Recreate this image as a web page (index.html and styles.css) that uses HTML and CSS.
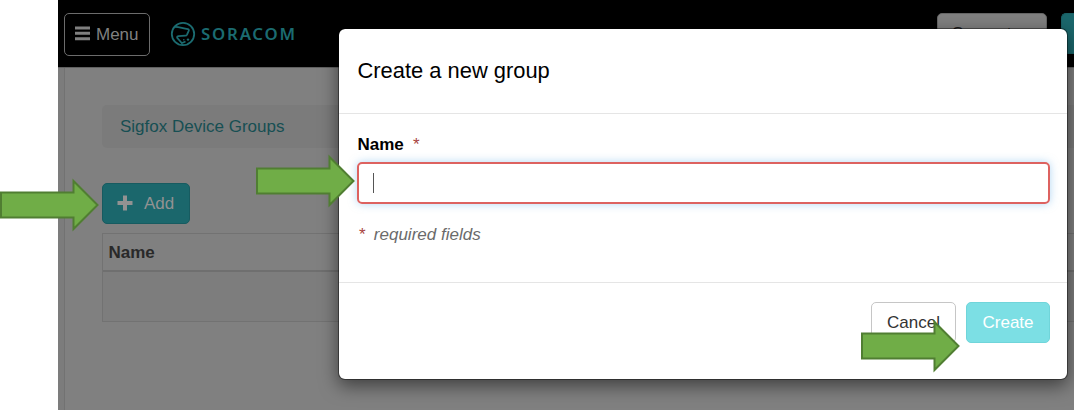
FILE: index.html
```html
<!DOCTYPE html>
<html lang="en">
<head>
<meta charset="utf-8">
<title>Sigfox Device Groups</title>
<link rel="stylesheet" href="styles.css">
</head>
<body>
<div class="app">
  <header class="topbar">
    <button class="menu-btn">
      <svg width="15" height="15" viewBox="0 0 15 15"><path d="M0 .5h15v3H0zM0 5.800h15v3H0zM0 11.200h15v3H0z" fill="currentColor"/></svg>
      <span>Menu</span>
    </button>
    <div class="brand">
      <svg width="26" height="26" viewBox="0 0 26 26" fill="none" stroke="currentColor" stroke-width="1.8">
        <circle cx="13" cy="13" r="11.2"/>
        <path d="M4.500 6C8 5.500 12 7.300 18 8.200Q19.300 8.500 18.700 9.800L17 13.600Q16.500 14.600 15.300 14.700L8.500 15.200Q6 15.700 7.800 17.500L13 23.500M11 22.500L15.500 20.500" stroke-linejoin="round"/>
        <circle cx="18" cy="18.600" r="1.2" fill="currentColor" stroke="none"/><circle cx="13.800" cy="18.800" r=".8" fill="currentColor" stroke="none"/>
      </svg>
      <span class="brand-name">SORACOM</span>
    </div>
    <div class="top-actions">
      <button class="support-btn">Support</button>
      <button class="account-btn"></button>
    </div>
  </header>
  <main class="content">
    <nav class="crumbs">Sigfox Device Groups</nav>
    <button class="add-btn">
      <svg width="16" height="16" viewBox="0 0 16 16"><path d="M6 .5h4V6h5.500v4H10v5.500H6V10H.5V6H6z" fill="currentColor"/></svg>
      <span>Add</span>
    </button>
    <div class="table">
      <div class="table-head">Name</div>
      <div class="table-row"></div>
    </div>
  </main>
</div>

<section class="modal">
  <h1 class="modal-head">Create a new group</h1>
  <div class="modal-body">
    <label class="label">Name <span class="star">*</span></label>
    <div class="input"><span class="caret"></span></div>
    <p class="hint"><span class="star">*</span> required fields</p>
  </div>
  <footer class="modal-foot">
    <button class="btn cancel">Cancel</button>
    <button class="btn create">Create</button>
  </footer>
</section>

<svg class="arrow arrow-add" viewBox="0 0 100 54"><path d="M1 14.500H73.500V3L97.500 27L73.500 51V39.500H1z"/></svg>
<svg class="arrow arrow-name" viewBox="0 0 100 54"><path d="M1 14.500H73.500V3L97.500 27L73.500 51V39.500H1z"/></svg>
<svg class="arrow arrow-create" viewBox="0 0 100 54"><path d="M1 14.500H73.500V3L97.500 27L73.500 51V39.500H1z"/></svg>
</body>
</html>
```
FILE: styles.css
```css
* { box-sizing: border-box; }
body {
  margin: 0;
  position: relative;
  height: 410px;
  overflow: hidden;
  background: #fff;
  font: 17px/24px "Liberation Sans", Arial, sans-serif;
}
button { font: inherit; margin: 0; padding: 0; }
.app {
  display: flex;
  flex-direction: column;
  height: 410px;
  margin-left: 58px;
  background: #7c7c7c;
}
.topbar {
  display: flex;
  align-items: flex-start;
  flex: none;
  height: 68px;
  padding: 13px 0 0 6px;
  background: #000;
  border-bottom: 1px solid #606060;
}
.menu-btn {
  display: flex;
  align-items: center;
  gap: 6px;
  width: 86px;
  height: 43px;
  padding-left: 10px;
  background: transparent;
  border: 1px solid #6c6c6c;
  border-radius: 5px;
  color: #808080;
}
.menu-btn svg { margin-top: -2px; }
.brand {
  display: flex;
  align-items: center;
  gap: 5px;
  height: 42px;
  margin-left: 20px;
  color: #1b6b70;
}
.brand-name {
  font: 600 16.800px/24px "Noto Sans", sans-serif;
  letter-spacing: 1.8px;
}
.top-actions { display: flex; gap: 14px; margin-left: auto; }
.support-btn {
  width: 110px;
  height: 41px;
  padding-left: 14px;
  text-align: left;
  background: #808080;
  border: 1px solid #666;
  border-radius: 5px;
  color: #191919;
}
.account-btn {
  width: 13px;
  height: 41px;
  background: #1b676c;
  border: 1px solid #195f64;
  border-right: 0;
  border-radius: 5px 0 0 5px;
}
.content {
  flex: 1;
  margin-left: 6px;
  padding: 37px 0 0 37px;
  background: #808080;
  border-left: 1px solid #727272;
}
.crumbs {
  height: 43px;
  padding: 10px 18px;
  background: #7b7b7b;
  border-radius: 5px 0 0 5px;
  color: #174f53;
}
.add-btn {
  display: flex;
  align-items: center;
  gap: 11px;
  width: 88px;
  height: 41px;
  margin-top: 35px;
  padding-left: 14px;
  background: #1b676c;
  border: 1px solid #175b60;
  border-radius: 5px;
  color: #929292;
}
.add-btn svg { margin-top: -2px; }
.table {
  margin-top: 9px;
  border: 1px solid #727272;
  border-right: 0;
}
.table-head {
  height: 38px;
  padding: 7px 5.500px;
  border-bottom: 2px solid #6f6f6f;
  color: #292929;
  font-weight: 700;
}
.table-row { height: 49px; background: #7d7d7d; }
.modal {
  position: absolute;
  left: 338px;
  top: 28px;
  width: 730px;
  height: 352px;
  background: #fff;
  background-clip: padding-box;
  border: 1px solid rgba(0, 0, 0, .4);
  border-radius: 7px;
  box-shadow: 0 6px 18px rgba(0, 0, 0, .5);
}
.modal-head {
  height: 85px;
  margin: 0;
  padding: 29px 18.500px 0;
  border-bottom: 1px solid #e5e5e5;
  color: #000;
  font-size: 21.9px;
  font-weight: 400;
  line-height: 26px;
}
.modal-body { height: 168px; padding: 19px 17px 0 18px; }
.label { display: block; font-weight: 700; padding-left: .5px; }
.label .star { margin-left: 4.500px; font-weight: 400; }
.star { color: #a94442; }
.input {
  display: flex;
  align-items: center;
  height: 42px;
  margin-top: 5px;
  padding-left: 14px;
  border: 2px solid #dd6260;
  border-radius: 5px;
  box-shadow: 0 0 8px rgba(102, 175, 233, .5);
}
.caret { width: 1px; height: 20px; background: #555; }
.hint {
  margin: 19px 0 0 2px;
  color: #6b6b6b;
  font-style: italic;
}
.hint .star { margin-right: 3.500px; font-style: normal; }
.modal-foot {
  display: flex;
  justify-content: flex-end;
  gap: 10px;
  padding: 19px 17px 0;
  border-top: 1px solid #e5e5e5;
}
.btn { height: 41px; border-radius: 5px; }
.cancel { width: 85px; background: #fff; border: 1px solid #c6c6c6; color: #333; }
.create { width: 84px; background: #7cdfe4; border: 1px solid #70d5da; color: #fff; }
.arrow {
  position: absolute;
  width: 100px;
  height: 54px;
  fill: #70ad47;
  stroke: #507e32;
  stroke-width: 2;
}
.arrow-add { left: 0; top: 178px; }
.arrow-name { left: 256px; top: 154px; }
.arrow-create { left: 861px; top: 319px; }
```
